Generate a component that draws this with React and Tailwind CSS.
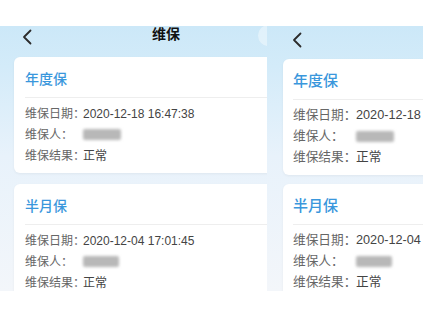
import React from "react";

function Chevron() {
  return (
    <svg width="10" height="16" viewBox="0 0 10 16" fill="none">
      <path d="M8.5 1.5 L2 8 L8.5 14.5" stroke="#2b2b2b" strokeWidth="1.8" strokeLinecap="round" strokeLinejoin="round" />
    </svg>
  );
}

function Blur({ w }) {
  return <span className="block h-[11px] rounded-[2px] bg-[#b8b8b8] blur-[1.5px]" style={{ width: w }} />;
}

function Row({ label, children, big }) {
  return (
    <div className={big ? "flex h-[21px] items-center text-[12.7px]" : "flex h-[21px] items-center text-[12px]"}>
      <span className={big ? "w-[63px] shrink-0 whitespace-nowrap text-[#666]" : "w-[58px] shrink-0 whitespace-nowrap text-[#666]"}>{label}</span>
      <span className="whitespace-nowrap text-[#444]">{children}</span>
    </div>
  );
}

function Card({ title, date, blurW, big }) {
  return (
    <div className={big ? "rounded-[6px] bg-white px-[10px] pb-[7px] pt-[12px] shadow-[0_1px_3px_rgba(0,0,0,0.05)]" : "rounded-[6px] bg-white px-[11px] pb-[7px] pt-[12px] shadow-[0_1px_3px_rgba(0,0,0,0.05)]"}>
      <div className={big ? "flex h-[20px] items-center text-[15px] font-medium text-[#3a97dc]" : "flex h-[20px] items-center text-[14px] font-medium text-[#3a97dc]"}>{title}</div>
      <div className="mb-[5px] mt-[8px] h-px bg-[#eeeeee]" />
      <Row label="维保日期：" big={big}>{date}</Row>
      <Row label="维保人：" big={big}><Blur w={blurW} /></Row>
      <Row label="维保结果：" big={big}>正常</Row>
    </div>
  );
}

function Screen({ big }) {
  return (
    <div className="flex h-full w-[332px] shrink-0 flex-col bg-[linear-gradient(180deg,#cce8f8_0px,#d3ebf9_40px,#e8f2fb_130px,#f3f6fa_265px)]">
      <div className={big ? "relative flex h-[32px] shrink-0 items-start pl-[25px] pt-[6px]" : "relative flex h-[31px] shrink-0 items-start pl-[22px] pt-[3px]"}>
        <Chevron />
        {!big && (
          <div className="absolute left-0 right-0 top-0 flex h-[19px] items-end justify-center text-[14px] font-bold text-[#111]">维保</div>
        )}
        {!big && <div className="absolute left-[258px] top-[-1px] h-[21px] w-[74px] rounded-full bg-white/40" />}
      </div>
      <div className={big ? "flex flex-col gap-[9px] px-[16px] pt-[1px]" : "flex flex-col gap-[11px] px-[14px]"}>
        <Card title="年度保" date="2020-12-18 16:47:38" blurW={38} big={big} />
        <Card title="半月保" date="2020-12-04 17:01:45" blurW={36} big={big} />
      </div>
    </div>
  );
}

export default function App() {
  return (
    <div className="h-[318px] w-[423px] overflow-hidden bg-white font-['Liberation_Sans','Noto_Sans_CJK_SC',sans-serif]">
      <div className="h-[26px]" />
      <div className="flex h-[265px] overflow-hidden">
        <div className="h-full w-[267px] shrink-0 overflow-hidden">
          <Screen />
        </div>
        <div className="h-full flex-1 overflow-hidden">
          <Screen big />
        </div>
      </div>
    </div>
  );
}
